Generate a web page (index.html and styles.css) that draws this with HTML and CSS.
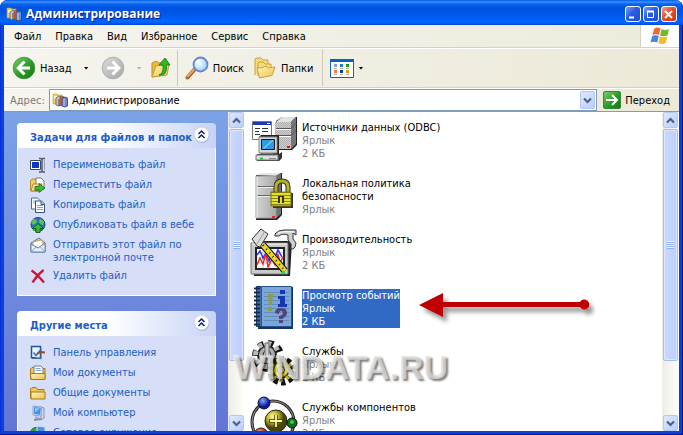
FILE: index.html
```html
<!DOCTYPE html>
<html lang="ru">
<head>
<meta charset="utf-8">
<title>Администрирование</title>
<link rel="stylesheet" href="styles.css">
</head>
<body>
<svg class="defs" aria-hidden="true">
  <defs>
    <linearGradient id="gGreen" x1="0" y1="0" x2="1" y2="1"><stop offset="0" stop-color="#7ed26e"/><stop offset=".5" stop-color="#2f9e2b"/><stop offset="1" stop-color="#147412"/></linearGradient>
    <linearGradient id="gGray" x1="0" y1="0" x2="1" y2="1"><stop offset="0" stop-color="#dcdcdc"/><stop offset="1" stop-color="#a6a6a6"/></linearGradient>
    <linearGradient id="gFolder" x1="0" y1="0" x2="1" y2="1"><stop offset="0" stop-color="#fff6b8"/><stop offset="1" stop-color="#edc24c"/></linearGradient>
    <linearGradient id="gTower" x1="0" x2="1"><stop offset="0" stop-color="#d4d4d4"/><stop offset="1" stop-color="#a8a8a8"/></linearGradient>
    <radialGradient id="gLens" cx=".4" cy=".4"><stop offset="0" stop-color="#fff"/><stop offset="1" stop-color="#a6d8f6"/></radialGradient>
    <radialGradient id="gBlueBall" cx=".4" cy=".3"><stop offset="0" stop-color="#8aa4ff"/><stop offset="1" stop-color="#0a1c9c"/></radialGradient>
    <radialGradient id="gYellowBall" cx=".35" cy=".3"><stop offset="0" stop-color="#fffa9a"/><stop offset=".5" stop-color="#c0b82a"/><stop offset="1" stop-color="#4a4608"/></radialGradient>
    <radialGradient id="gRedBall" cx=".4" cy=".3"><stop offset="0" stop-color="#ff9a7a"/><stop offset="1" stop-color="#8a1c08"/></radialGradient>
    <pattern id="pDots" width="2" height="2" patternUnits="userSpaceOnUse"><rect width="1" height="1" fill="#888"/><rect x="1" y="1" width="1" height="1" fill="#888"/></pattern>
    <pattern id="pYellow" width="2" height="3" patternUnits="userSpaceOnUse"><rect width="2" height="3" fill="#e8e020"/><rect y="2" width="2" height="1" fill="#8a8410"/></pattern>
    <symbol id="admin" viewBox="0 0 16 16">
      <path d="M1 2h4l1 1h4v9H1z" fill="#f0cc55" stroke="#c29a2c" stroke-width=".6"/><path d="M2 4h7v3H2z" fill="#fff1a5"/>
      <path d="M4 6l3-2 2 1v8l-3 1-2-1z" fill="#c8c8d2" stroke="#55566a" stroke-width=".8"/><path d="M7 7v7" stroke="#444"/>
      <path d="M8 5l2-1 2 1v8l-2 1-2-1z" fill="#e46a36" stroke="#7c3520" stroke-width=".6"/>
      <path d="M10 6l3-1 2.500 1v8L13 15l-3-1z" fill="#7489bd" stroke="#333f67" stroke-width=".8"/><path d="M12 7v7" stroke="#c7d6f5"/>
    </symbol>
    <symbol id="chev" viewBox="0 0 9 9"><path d="M1 2.500l3.500 3.500L8 2.500" fill="none" stroke="#4d6185" stroke-width="2.200"/></symbol>
    <symbol id="chevup" viewBox="0 0 9 9"><path d="M1 6.500L4.500 3 8 6.500" fill="none" stroke="#4d6185" stroke-width="2.200"/></symbol>
    <symbol id="collapse" viewBox="0 0 17 17">
      <circle cx="9" cy="9.500" r="7.500" fill="#8c9ccb" opacity=".6"/><circle cx="8.500" cy="8.500" r="7.500" fill="#fff" stroke="#b9c4e4" stroke-width=".7"/>
      <path d="M5.500 8l3-3 3 3M5.500 12l3-3 3 3" fill="none" stroke="#0a246a" stroke-width="1.500"/>
    </symbol>
  </defs>
</svg>

<div class="window">
  <header class="titlebar">
    <svg class="i16"><use href="#admin"/></svg>
    <h1>Администрирование</h1>
    <div class="controls">
      <button class="ctl" type="button" aria-label="Свернуть"><svg viewBox="0 0 13 13"><path d="M3 9.500h5" stroke="#fff" stroke-width="2.200"/></svg></button>
      <button class="ctl" type="button" aria-label="Развернуть"><svg viewBox="0 0 13 13"><path d="M3.500 3.500h6v6h-6z" fill="none" stroke="#fff"/><path d="M3 3.500h7" stroke="#fff" stroke-width="2"/></svg></button>
      <button class="ctl close" type="button" aria-label="Закрыть"><svg viewBox="0 0 13 13"><path d="M3 3l7 7M10 3l-7 7" stroke="#fff" stroke-width="2"/></svg></button>
    </div>
  </header>

  <div class="menurow">
    <nav class="menu">
      <button type="button">Файл</button><button type="button">Правка</button><button type="button">Вид</button><button type="button">Избранное</button><button type="button">Сервис</button><button type="button">Справка</button>
    </nav>
    <div class="flag">
      <svg viewBox="0 0 20 18">
        <path d="M4 2q3-2.500 6.500-.5L9 8Q6 6.500 2.500 8z" fill="#ee6a38"/>
        <path d="M11.500 2q3.500 1.800 7.500 0l-1.500 6.500q-4 1.500-7.500 0z" fill="#76b82c"/>
        <path d="M2.200 9Q5.500 7.500 8.800 9l-1.500 6.500Q4 14 .5 15.500z" fill="#4289dc"/>
        <path d="M9.800 9.500q3.500 1.500 7.500 0L15.800 16q-4 2-7.500 0z" fill="#f5bd25"/>
      </svg>
    </div>
  </div>

  <div class="toolbar">
    <button type="button" class="tool">
      <svg class="i24" viewBox="0 0 24 24"><circle cx="12" cy="12" r="10.800" fill="url(#gGreen)" stroke="#3c8f35" stroke-width=".8"/><path d="M12.500 5.500L6.200 12l6.300 6.500M6.500 12H18" fill="none" stroke="#fff" stroke-width="3"/></svg>
      <span>Назад</span><i class="caret wide"></i>
    </button>
    <button type="button" class="tool fwd" aria-label="Вперед">
      <svg class="i24" viewBox="0 0 24 24"><circle cx="12" cy="12" r="10.800" fill="url(#gGray)" stroke="#a2a2a2" stroke-width=".8"/><path d="M11.500 5.500l6.300 6.500-6.300 6.500M17.500 12H6" fill="none" stroke="#fff" stroke-width="3"/></svg>
      <i class="caret dim"></i>
    </button>
    <button type="button" class="tool up" aria-label="Вверх">
      <svg class="i24" viewBox="0 0 24 24"><path d="M3 21V7l4-2 3 2h6v12z" fill="#e9b93c" stroke="#bf9023"/><path d="M3 21l4-11 13-2-2 11z" fill="url(#gFolder)" stroke="#c79c2f"/><path d="M10 19q5-1 4-10h-4l6-7 5 7h-3.500q.5 9-4.500 10z" fill="#35b52b" stroke="#157c13" stroke-width=".9"/></svg>
    </button>
    <span class="sep"></span>
    <button type="button" class="tool">
      <svg class="i24" viewBox="0 0 24 24"><path d="M9.500 13.500L2.500 21.500" stroke="#a46330" stroke-width="4" stroke-linecap="round"/><path d="M9 13.500L2.500 20.500" stroke="#f3a25a" stroke-width="2" stroke-linecap="round"/><circle cx="15.500" cy="8.500" r="7" fill="url(#gLens)" stroke="#6b84cf" stroke-width="1.800"/><path d="M11 7q1.500-3 4.500-3" fill="none" stroke="#fff" stroke-width="1.500"/></svg>
      <span>Поиск</span>
    </button>
    <button type="button" class="tool">
      <svg class="i24" viewBox="0 0 24 24"><path d="M2 19V3l2-1h4l2 2h5v4" fill="#f6dc7d" stroke="#c9a23a"/><path d="M5 20V7l1-1h4l2 2h6v3" fill="#f6dc7d" stroke="#c9a23a"/><path d="M6.500 22L4 11.500l4 .5 5-2 2 2 7-1-3 8.500z" fill="url(#gFolder)" stroke="#c9a23a"/></svg>
      <span>Папки</span>
    </button>
    <span class="sep"></span>
    <button type="button" class="tool" aria-label="Вид">
      <svg class="i24" viewBox="0 0 24 24"><path d="M.5 3.500h23v18H.5z" fill="#fff" stroke="#0a62c4"/><path d="M0 3h24v3H0z" fill="#0a62c4"/><path d="M4 8h3v3H4z" fill="#9a94cf"/><path d="M10 8h3v3h-3z" fill="#1c7ae0"/><path d="M16 8h3v3h-3z" fill="#149a1c"/><path d="M4 14h3v3H4z" fill="#ff7a45"/><path d="M10 14h3v3h-3z" fill="#0a3c9c"/><path d="M16 14h3v3h-3z" fill="#cf9d10"/><path d="M4 12.500h3m3 0h3m3 0h3M4 18.500h3m3 0h3m3 0h3" stroke="#aaa"/></svg>
      <i class="caret tight"></i>
    </button>
  </div>

  <form class="address">
    <label for="addr">Адрес:</label>
    <div class="combo">
      <svg class="i16"><use href="#admin"/></svg>
      <input id="addr" type="text" value="Администрирование">
      <button type="button" class="sbtn" aria-label="Список адресов"><svg><use href="#chev"/></svg></button>
    </div>
    <button type="button" class="go"><svg viewBox="0 0 18 18"><rect x=".5" y=".5" width="17" height="17" rx="1.500" fill="url(#gGreen)" stroke="#34873a"/><path d="M3 9h11M9 4l5 5-5 5" fill="none" stroke="#fff" stroke-width="2"/></svg>Переход</button>
  </form>

  <div class="body">
    <aside class="side">
      <section class="card">
        <h2><span>Задачи для файлов и папок</span><button type="button" aria-label="Свернуть задачи"><svg><use href="#collapse"/></svg></button></h2>
        <ul>
          <li><svg class="i16" viewBox="0 0 16 16"><path d="M.5 3.500h10v9H.5z" fill="#fff" stroke="#3b4763"/><path d="M2 5h7v6H2z" fill="#0a3bbd"/><path d="M9 1.500h2l1 1 1-1h2M12 2v12M9 15h2l1-1 1 1h2" fill="none" stroke="#53596a" stroke-width="1.500"/><path d="M14.500 3v10" stroke="#9aa0b0"/></svg><a href="#">Переименовать файл</a></li>
          <li><svg class="i16" viewBox="0 0 16 16"><path d="M.5 3.500L2 2h3l1 1h4l1 11H.5z" fill="#f0cf68" stroke="#b58b2b"/><path d="M6 1h5l3 3v8H6z" fill="#fff" stroke="#777"/><path d="M1 14l2-7h9l-2 7z" fill="url(#gFolder)" stroke="#b58b2b"/><path d="M5 13.500V9.500h4V6.500l6 4.500-6 4.500v-3H7.500v1z" fill="#3dbb35" stroke="#146b12" stroke-width=".8"/></svg><a href="#">Переместить файл</a></li>
          <li><svg class="i16" viewBox="0 0 16 16"><path d="M1.500 1h6l3 3v8h-9z" fill="#fff" stroke="#456f9d"/><path d="M3 4h4M3 6h3" stroke="#88a5d5"/><path d="M5.500 4h6l3 3v8.500h-9z" fill="#fff" stroke="#34557f"/><path d="M7 8.500h6M7 10.500h6M7 12.500h6" stroke="#7ba3d5"/><path d="M11 4v3.500h3" fill="#bcd" stroke="#34557f"/></svg><a href="#">Копировать файл</a></li>
          <li><svg class="i16" viewBox="0 0 16 16"><circle cx="8" cy="7.500" r="7" fill="#2672c8" stroke="#19457d"/><path d="M3 2q4 0 4 3L4 8 1 6zM10 1.500l4 3-1 4-4-3zM2 10l3 1v3z" fill="#62c250"/><path d="M8 6.500l5.500 5H10v4H6v-4H2.500z" fill="#38b931" stroke="#0d610e" stroke-width=".9"/></svg><a href="#">Опубликовать файл в вебе</a></li>
          <li><svg class="i16" viewBox="0 0 16 16"><path d="M1 6l8-5 6 5v9H1z" fill="#b9d2f2" stroke="#5b7194"/><path d="M3 5l8-2 2 1v7H3z" fill="#fff" stroke="#c99a44"/><path d="M1 7l7 4 7-5v9H1z" fill="#e3effd" stroke="#66809f"/><path d="M1 15l5-5M15 15l-5-5.500" stroke="#88a3c4"/></svg><a href="#">Отправить этот файл по электронной почте</a></li>
          <li><svg class="i16" viewBox="0 0 16 16"><path d="M1.500 2.500Q6 5 14 14.500M13.500 2Q7 7 2.500 14.500" fill="none" stroke="#c91432" stroke-width="2.400"/></svg><a href="#">Удалить файл</a></li>
        </ul>
      </section>
      <section class="card">
        <h2><span>Другие места</span><button type="button" aria-label="Свернуть места"><svg><use href="#collapse"/></svg></button></h2>
        <ul>
          <li><svg class="i16" viewBox="0 0 16 16"><path d="M1.500 1.500h9v12l-9-1z" fill="#e8f3ff" stroke="#23558e" stroke-width="1.500"/><path d="M2 13.500h9V3" fill="none" stroke="#4a6c96"/><path d="M3.500 7.500l2.500 3 4-5" fill="none" stroke="#2d78d2" stroke-width="1.500"/><path d="M7 9l3-2 5 .5" fill="none" stroke="#8c5128" stroke-width="2"/></svg><a href="#">Панель управления</a></li>
          <li><svg class="i16" viewBox="0 0 16 16"><path d="M.5 14V4L2 2.500h3l1 1h9V14z" fill="#edc55b" stroke="#a57a1c"/><path d="M4 1h7l2 2v7H4z" fill="#fff" stroke="#6581a9"/><path d="M5.500 3.500h5m-5 2h6" stroke="#86a7d1"/><path d="M.5 8.500h14.500V14.500H1z" fill="url(#gFolder)" stroke="#a57a1c"/></svg><a href="#">Мои документы</a></li>
          <li><svg class="i16" viewBox="0 0 16 16"><path d="M.5 13.500V4L2 2.500h4l1.500 2H14v2" fill="#edc55b" stroke="#a57a1c"/><path d="M1 14V7h14v7z" fill="url(#gFolder)" stroke="#a57a1c"/></svg><a href="#">Общие документы</a></li>
          <li><svg class="i16" viewBox="0 0 16 16"><path d="M11 2l3 1v10l-3 2z" fill="#d7dceb" stroke="#8791ad"/><path d="M3 1l9 1-1 9-8-1z" fill="#dce7f7" stroke="#8fa0c2"/><path d="M4 2l7 .8-.9 7L4 9z" fill="#3f93ea"/><path d="M5 3l5 .5-5 4z" fill="#8cc6fa"/><path d="M5 11l4 1v2H5z" fill="#a9b4cd"/><path d="M4 15l7-1" stroke="#8690ab" stroke-width="2"/></svg><a href="#">Мой компьютер</a></li>
          <li><svg class="i16" viewBox="0 0 16 16"><circle cx="6" cy="8" r="5.500" fill="#3aa645" stroke="#22683c"/><path d="M7 1l8 1v8H7z" fill="#4b94e8" stroke="#cfe0f6"/></svg><a href="#">Сетевое окружение</a></li>
        </ul>
      </section>
    </aside>
    <div class="scroll">
      <button type="button" class="sbtn" aria-label="Вверх"><svg><use href="#chevup"/></svg></button>
      <div class="thumb"><i></i></div><div class="track"></div>
      <button type="button" class="sbtn" aria-label="Вниз"><svg><use href="#chev"/></svg></button>
    </div>

    <main class="files">
      <button type="button" class="file">
        <svg viewBox="0 0 48 48"><path d="M26 5l6-4h15v28l-5 5H26z" fill="#222"/><path d="M26 6l6-5h14l-5 5z" fill="#e2e2e2"/><path d="M41 6l5-5v27l-5 5z" fill="#777"/><path d="M25 6h16v27H25z" fill="#cfcfcf"/><path d="M25 6h16v27H25z" fill="url(#pDots)" opacity=".45"/><path d="M26 12.500h15l5-5M26 19.500h15l5-5" fill="none" stroke="#555"/><path d="M26 13.500h15M26 20.500h15" stroke="#fff"/><path d="M37 30h3v2h-3z" fill="#e11"/>
        <path d="M2.500 5.500h19v18h-19z" fill="#fff" stroke="#777"/><path d="M3 6h18v3H3z" fill="#2038b8"/><path d="M17 7.500h3" stroke="#fff"/><path d="M5 12.500h5m2 0h6M5 15.500h4m3 0h6M5 18.500h5" stroke="#333"/>
        <path d="M9 21l2-2h18v20H11z" fill="#222"/><path d="M9 21h18v16H9z" fill="#d8d8d8" stroke="#888"/><path d="M11.500 23.500h13v10h-13z" fill="#2d9ce8" stroke="#111"/><path d="M13 32l9-8h2l-10 9z" fill="#7cc8f5"/><path d="M12 37h11v2H12z" fill="#777"/>
        <path d="M7 38h22l3-2v6l-3 3H7z" fill="#333"/><path d="M6 39h22v5H6z" fill="#ddd" stroke="#777"/><path d="M10 42.500h3" stroke="#1c3" stroke-width="2"/><path d="M19 42.500h7" stroke="#888"/></svg>
        <span class="text"><span class="name">Источники данных (ODBC)</span><span class="meta">Ярлык<br>2 КБ</span></span>
      </button>
      <button type="button" class="file">
        <svg viewBox="0 0 48 48"><path d="M8 3l4-2h20v42l-5 5H6V3z" fill="#222"/><path d="M6 3l4-2h21l-5 3z" fill="#e6e6e6"/><path d="M26 4l5-3v41l-5 4z" fill="#707070"/><path d="M6 4h20v42H6z" fill="url(#gTower)" stroke="#999"/><path d="M7 14.500h19M7 23.500h19" stroke="#666"/><path d="M7 15.500h19M7 24.500h19" stroke="#eee"/><path d="M7 5v41" stroke="#eee"/><path d="M22 44h3v2h-3z" fill="#e22"/>
        <path d="M26 20v-5q0-6 6-6t6 6v5" fill="none" stroke="#333" stroke-width="5"/><path d="M26 20v-5q0-6 6-6t6 6v5" fill="none" stroke="#b9b020" stroke-width="3"/><path d="M23 21h20v15H23z" fill="#333"/><path d="M21 20h20v14H21z" fill="url(#pYellow)" stroke="#79720c"/><path d="M28 24h6v7h-6z" fill="#333"/><path d="M30 25h2v6h-2z" fill="#e8e020"/></svg>
        <span class="text"><span class="name">Локальная политика безопасности</span><span class="meta">Ярлык</span></span>
      </button>
      <button type="button" class="file">
        <svg viewBox="0 0 48 48"><path d="M2 16l4-3h36l-2 35H4z" fill="#222"/><path d="M1 15h37v31H1z" fill="#c9c9c9" stroke="#777"/><path d="M2 16h35" stroke="#fff"/><path d="M6 20h28v21H6z" fill="#fff" stroke="#222" stroke-width="2"/><path d="M7 25h26M7 30h26M7 35h26M13 21v19M20 21v19M27 21v19" stroke="#ccc"/><path d="M7 27l3-4 3 7 3-5 3 8 3-9 3 5 3-7 4 7" fill="none" stroke="#2935ef" stroke-width="1.500"/><path d="M7 37l3-7 3 6 3-11 2 14 4-8 3 6 3-11 2 9 3-6" fill="none" stroke="#ef2929" stroke-width="1.500"/>
        <path d="M25 6q3-4 9-4h12v5l-3-2v6l3 4q-1 7-5 6v-5l-3-4V7q-6-2-9 1h-4z" fill="#cfcfcf" stroke="#333"/><path d="M28 5q5-2 16-1" fill="none" stroke="#fff"/>
        <path d="M13 17l22 26" stroke="#111" stroke-width="7"/><path d="M13 17l22 26" stroke="#e7d921" stroke-width="5"/><path d="M13 17l22 26" stroke="#222" stroke-width="2" stroke-dasharray="1 4"/><path d="M2 11L11 1l7 5-8 13-3-1z" fill="#dcdcdc" stroke="#333"/><path d="M7 16l8-13" stroke="#999"/><path d="M32 43h3v3h-3z" fill="#2d3"/></svg>
        <span class="text"><span class="name">Производительность</span><span class="meta">Ярлык<br>2 КБ</span></span>
      </button>
      <button type="button" class="file selected">
        <svg viewBox="0 0 48 48"><path d="M8 3h35v42H8z" fill="#17345c"/><path d="M6.500 2.500h5v40h-5z" fill="#4771a5" stroke="#17345c"/><path d="M11.500 2.500h30v40h-30z" fill="#7ba6dc" stroke="#2c548c"/><path d="M14 8.500h25m-25 4h25m-25 4h25m-25 4h25m-25 4h25m-25 4h25m-25 4h25m-25 4h25" stroke="#648dbe"/><path d="M4 4.500h6m-6 4h6m-6 4h6m-6 4h6m-6 4h6m-6 4h6m-6 4h6m-6 4h6m-6 4h6m-6 4h6" stroke="#142b4d" stroke-width="2"/><path d="M18 10h5l-1 11h-3zM18 23h4v4h-4z" fill="#8c9c4a"/><path d="M30 6h5v4h-5zM28 12h7v8h2v3h-9v-3h2v-5h-2z" fill="#1736b2"/><path d="M25 29q0-5 6-5t6 5q0 3-5 6h-3v-3q4-1 4-3 0-2-2-2t-2 3zM29 36h4v3h-4z" fill="#514575"/></svg>
        <span class="text"><span class="name">Просмотр событий</span><span class="meta">Ярлык<br>2 КБ</span></span>
      </button>
      <button type="button" class="file">
        <svg viewBox="0 0 48 48"><circle cx="18" cy="16" r="12" fill="none" stroke="#111" stroke-width="8" stroke-dasharray="5 4.400"/><circle cx="17" cy="15" r="9" fill="#aaa" stroke="#222" stroke-width="2"/><circle cx="17" cy="15" r="11.500" fill="none" stroke="#b9b9b9" stroke-width="5" stroke-dasharray="4 5"/><circle cx="17" cy="15" r="4" fill="#fff" stroke="#222"/><path d="M15 3h4v15h-4z" fill="#ccc" stroke="#666"/>
        <circle cx="32" cy="31" r="11" fill="none" stroke="#111" stroke-width="7" stroke-dasharray="4 3"/><circle cx="31" cy="30" r="8" fill="#e5dc34" stroke="#3a370c" stroke-width="2"/><circle cx="31" cy="30" r="10" fill="none" stroke="#bdb526" stroke-width="4" stroke-dasharray="3 4"/><circle cx="31" cy="30" r="3.500" fill="#fff" stroke="#333"/></svg>
        <span class="text"><span class="name">Службы</span><span class="meta">Ярлык<br>2 КБ</span></span>
      </button>
      <button type="button" class="file">
        <svg viewBox="0 0 48 48"><circle cx="23" cy="26" r="21" fill="none" stroke="#222" stroke-width="3"/><circle cx="23" cy="26" r="21" fill="none" stroke="#999"/><circle cx="26" cy="25" r="11" fill="url(#gYellowBall)" stroke="#222"/><path d="M26 19v13M19 25h14" stroke="#443f08" stroke-width="3.500"/><path d="M26 19v12M20 25h12" stroke="#fff6a0" stroke-width="1.800"/><circle cx="14" cy="7" r="6" fill="url(#gBlueBall)" stroke="#111"/><circle cx="42" cy="27" r="5" fill="#176c1b" stroke="#111"/><circle cx="42" cy="26" r="2" fill="#36d13c"/><circle cx="11" cy="39" r="7" fill="url(#gRedBall)" stroke="#222"/></svg>
        <span class="text"><span class="name">Службы компонентов</span><span class="meta">Ярлык<br>2 КБ</span></span>
      </button>
    </main>
    <div class="scroll">
      <button type="button" class="sbtn" aria-label="Вверх"><svg><use href="#chevup"/></svg></button>
      <div class="thumb"><i></i></div><div class="track"></div>
      <button type="button" class="sbtn" aria-label="Вниз"><svg><use href="#chev"/></svg></button>
    </div>
  </div>
  <svg class="pointer" viewBox="0 0 180 36"><path d="M2 13L26 1v9h137a5 5 0 1 1 0 5H26v10z" fill="#c00000"/></svg>
  <div class="watermark">WINDATA.RU</div>
</div>
</body>
</html>
```
FILE: styles.css
```css
* { box-sizing: border-box; }

body {
  margin: 0;
  background: #fff;
  color: #000;
  font: 11px/13px "DejaVu Sans Condensed", "DejaVu Sans", sans-serif;
}

button {
  margin: 0;
  padding: 0;
  border: 0;
  background: none;
  color: inherit;
  font: inherit;
}

svg { display: block; flex: none; }
.defs { position: absolute; width: 0; height: 0; }
.i16 { width: 16px; height: 16px; }
.i24 { width: 24px; height: 24px; }

.window {
  position: relative;
  display: flex;
  flex-direction: column;
  height: 100vh;
  overflow: hidden;
  padding: 0 4px 4px;
  border-radius: 8px 8px 0 0;
  background: #0842d8;
  box-shadow: inset -1px -1px 0 #00138c, inset 1px 0 0 #0831d9, inset -2px -2px 0 #0441d8;
}

/* Title bar */
.titlebar {
  display: flex;
  align-items: center;
  flex: none;
  gap: 4px;
  height: 25px;
  margin: 0 -4px;
  padding: 3px 6px 0;
  background: linear-gradient(#0058e6 0, #3a93ff 2px, #0a62ee 4px, #0053e1 8px, #0058eb 15px, #0066ff 20px, #0060f8 23px, #0043cf 25px);
}
.titlebar h1 {
  flex: 1;
  margin: 0;
  color: #fff;
  font: bold 12px/16px "Open Sans", "Noto Sans", sans-serif;
  text-shadow: 1px 1px 1px #0a1883;
}
.controls { display: flex; gap: 2px; }
.ctl {
  width: 16px;
  height: 16px;
  border: 1px solid #fff;
  border-radius: 3px;
  background: linear-gradient(135deg, #7f9ef5, #2a5ce0 45%, #1f4fd0);
}
.ctl svg { width: 13px; height: 13px; }
.ctl.close { background: linear-gradient(135deg, #f0a088, #e0502c 45%, #c23a14); }

/* Menu row */
.menurow {
  display: flex;
  flex: none;
  height: 23px;
  border-bottom: 1px solid #d8d2bd;
  background: linear-gradient(90deg, #f5f4ee, #edebdb);
}
.menu { display: flex; flex: 1; align-items: center; padding-left: 3px; }
.menu button { padding: 0 7px; }
.flag {
  display: grid;
  place-items: center;
  width: 39px;
  border-left: 1px solid #d8d2bd;
  background: #fff;
}
.flag svg { width: 20px; height: 18px; }

/* Toolbar */
.toolbar {
  display: flex;
  flex: none;
  align-items: center;
  height: 40px;
  padding-left: 8px;
  border-top: 1px solid #fff;
  border-bottom: 1px solid #d8d2bd;
  background: linear-gradient(90deg, #f5f4ee, #ece9d8);
}
.tool { display: flex; align-items: center; gap: 4px; padding-right: 9px; }
.fwd { padding: 0 7px 0 3px; }
.up { padding-right: 4px; }
.caret {
  width: 5px;
  height: 3px;
  background: #000;
  clip-path: polygon(0 0, 100% 0, 50% 100%);
}
.caret.wide { margin-left: 8px; }
.caret.dim { margin-left: 8px; background: #b0aea2; }
.sep {
  width: 1px;
  height: 36px;
  margin-right: 7px;
  background: #cdc8b4;
}

/* Address bar */
.address {
  display: flex;
  flex: none;
  align-items: center;
  height: 24px;
  margin: 0;
  padding-left: 6px;
  border-top: 1px solid #fff;
  border-bottom: 1px solid #7f9db9;
  background: linear-gradient(90deg, #f5f4ee, #ece9d8);
}
.address label { width: 39px; color: #7d7a70; }
.combo {
  display: flex;
  flex: 1;
  align-items: center;
  height: 22px;
  padding: 1px 1px 1px 2px;
  border: 1px solid #7f9db9;
  background: #fff;
}
.combo input {
  flex: 1;
  min-width: 0;
  padding: 0 4px;
  border: 0;
  background: none;
  font: inherit;
}
.combo .sbtn { height: 18px; }
.go { display: flex; align-items: center; gap: 4px; padding: 0 9px 0 6px; }
.go svg { width: 18px; height: 18px; }

/* Scroll bars */
.sbtn {
  display: grid;
  flex: none;
  place-items: center;
  width: 15px;
  height: 16px;
  border: 1px solid #b4c8f6;
  border-radius: 2px;
  background: linear-gradient(135deg, #dfe8ff, #b9cdfa);
}
.sbtn svg { width: 9px; height: 9px; }
.scroll {
  display: flex;
  flex: none;
  flex-direction: column;
  width: 17px;
  padding: 0 1px;
  background: linear-gradient(90deg, #eeede5, #fefefb);
}
.thumb {
  display: grid;
  flex: 81;
  place-items: center;
  width: 15px;
  margin-top: 1px;
  border: 1px solid #a4bcf0;
  border-radius: 2px;
  background: linear-gradient(90deg, #cad9fd, #bcd0fc);
  box-shadow: inset 0 0 0 1px #dde7ff;
}
.thumb i {
  width: 7px;
  height: 8px;
  background: repeating-linear-gradient(#eef4fe 0 1px, #8cb0f8 1px 2px);
}
.track { flex: 19; }

/* Body */
.body { display: flex; flex: 1; min-height: 0; background: #fff; }
.side {
  flex: 0 0 224px;
  overflow: hidden;
  padding: 11px 12px 0 13px;
  background: linear-gradient(#7ba2e7, #6375d6);
}
.card { margin-bottom: 15px; }
.card h2 {
  display: flex;
  align-items: center;
  height: 25px;
  margin: 0;
  padding: 0 6px 0 13px;
  border-radius: 4px 4px 0 0;
  background: linear-gradient(90deg, #fff 45%, #c6d3f7);
  color: #215dc6;
  font-size: 11px;
}
.card h2 span { flex: 1; overflow: hidden; padding-top: 3px; white-space: nowrap; }
.card h2 button { flex: none; padding-bottom: 2px; }
.card h2 svg { width: 17px; height: 17px; }
.card ul {
  display: flex;
  flex-direction: column;
  gap: 4px;
  margin: 0;
  padding: 9px 12px 11px;
  border: 1px solid #fff;
  border-top: 0;
  background: #d6dff7;
  list-style: none;
}
.card li { display: flex; gap: 7px; }
.card a { flex: 1; padding-top: 1px; color: #215dc6; text-decoration: none; }

.files {
  display: flex;
  flex: 1;
  flex-direction: column;
  align-items: flex-start;
  gap: 8px;
  overflow: hidden;
  padding: 4px 0 0 5px;
}
.file { display: flex; flex: none; align-items: center; gap: 4px; height: 48px; text-align: left; }
.file > svg { width: 48px; height: 48px; }
.text { display: block; max-width: 148px; }
.name, .meta { display: block; }
.meta { color: #808080; }
.selected .text { background: #316ac5; }
.selected .name, .selected .meta { color: #fff; }

/* Overlays */
.pointer {
  position: absolute;
  top: 292px;
  left: 417px;
  width: 180px;
  height: 36px;
  filter: drop-shadow(4px 5px 2px rgba(0, 0, 0, .4));
}
.watermark {
  position: absolute;
  top: 347px;
  left: 234px;
  color: rgba(222, 222, 222, .75);
  font: bold 34px/40px "Liberation Sans", Arial, sans-serif;
  text-shadow: 2px 2px 2px rgba(0, 0, 0, .5), -1px -1px 1px rgba(255, 255, 255, .6);
}
```
